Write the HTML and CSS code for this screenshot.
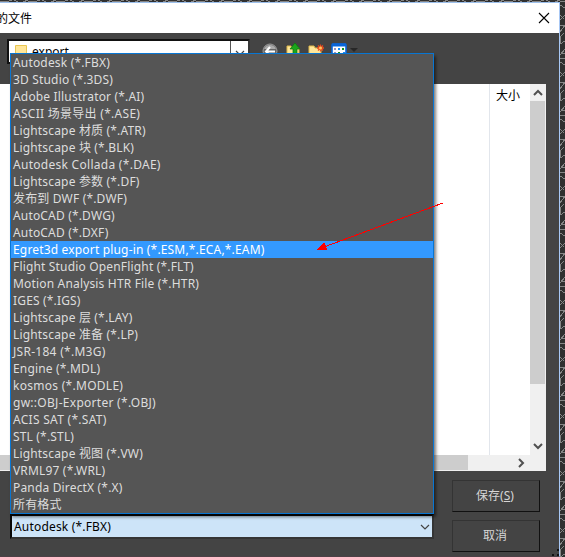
FILE: index.html
```
<!DOCTYPE html>
<html lang="zh-CN">
<head>
<meta charset="utf-8">
<title>的文件</title>
<link rel="stylesheet" href="styles.css">
</head>
<body>
<svg class="backdrop" width="565" height="557" aria-hidden="true" shape-rendering="crispEdges">
  <defs><pattern id="cracks" width="28" height="57" patternUnits="userSpaceOnUse">
    <path d="M0 1h9l3-1M14 0l4 2h5l5-2M0 5l5 3 5-4 4 5M0 15l4 4M0 25h5l-5 7M5 8v7l-5 5M4 33l-4 4v7l5-3M5 49l-5 6M1 53h4" fill="none" stroke="#858585"/>
  </pattern></defs>
  <rect width="565" height="557" fill="#303030"/>
  <rect width="565" height="557" fill="url(#cracks)"/>
</svg>
<main class="dialog">
  <header class="titlebar">
    <span class="title">的文件</span>
    <svg class="close" width="12" height="12" viewBox="0 0 12 12"><path d="M1 1l10 10M11 1L1 11" stroke="#000" stroke-width="1.1"/></svg>
  </header>
  <div class="toolbar">
    <div class="location">
      <svg width="12" height="14" viewBox="0 0 12 14"><path d="M.5.5h11v13H.5z" fill="#ffe69a" stroke="#e8c651"/></svg>
      <span class="location-name">export</span>
      <span class="drop"><svg width="10" height="6" viewBox="0 0 10 6"><path d="M1 1l4 4 4-4" fill="none" stroke="#444" stroke-width="1.2"/></svg></span>
    </div>
    <div class="tools">
      <svg width="16" height="16" viewBox="0 0 16 16"><circle cx="8" cy="8" r="7" fill="#666" stroke="#999"/><path d="M2 6a6.500 6.500 0 0 1 12 0" fill="#aaa"/><path d="M13 8.500H5M8 4L4 8.500l4 4" fill="none" stroke="#fff" stroke-width="2"/></svg>
      <svg width="16" height="16" viewBox="0 0 16 16"><path d="M2 3h4l1 2h7v10H2z" fill="#ffe79a" stroke="#dfb94a"/><path d="M8 14V6H5l5-6 5 6h-3v8z" fill="#1ba51b" stroke="#087a0b" stroke-width=".7"/></svg>
      <svg width="16" height="16" viewBox="0 0 16 16"><path d="M1 3h5l1 2h6v10H1z" fill="#ffe79a" stroke="#dfb94a"/><path d="M12.500 1.500v7M9 5h7M10 2.500l5 5M15 2.500l-5 5" stroke="#ee4a1c" stroke-width="1.300"/><circle cx="12.500" cy="5" r="1.500" fill="#ffc45b"/></svg>
      <svg width="16" height="16" viewBox="0 0 16 16"><rect x="1" y="1" width="14" height="14" rx="1" fill="#fff" stroke="#0864d8" stroke-width="1.600"/><path d="M1 2h14" stroke="#0864d8" stroke-width="3"/><path d="M3 6h2M3 10h2" stroke="#9c91bd" stroke-width="2"/><path d="M7 6h2M12 10h2" stroke="#168cff" stroke-width="2"/><path d="M11 6h2M7 10h2" stroke="#11911d" stroke-width="2"/></svg>
      <svg class="more" width="8" height="5" viewBox="0 0 8 5"><path d="M0 0h8L4 4z" fill="#272727"/></svg>
    </div>
  </div>
  <section class="files">
    <div class="sheet">
      <div class="names"></div>
      <div class="size">大小</div>
    </div>
    <div class="vscroll">
      <svg width="16" height="17" viewBox="0 0 16 17"><path d="M4 11l4-4 4 4" fill="none" stroke="#505050" stroke-width="2"/></svg>
      <div class="vthumb"></div>
      <svg class="down" width="16" height="17" viewBox="0 0 16 17"><path d="M4 6l4 4 4-4" fill="none" stroke="#505050" stroke-width="2"/></svg>
    </div>
    <div class="hscroll"><div class="hthumb"></div><svg width="16" height="16" viewBox="0 0 16 16"><path d="M6 4l4 4-4 4" fill="none" stroke="#505050" stroke-width="2"/></svg></div>
  </section>
  <footer class="actions">
    <div class="type"><span>Autodesk (*.FBX)</span><svg width="10" height="6" viewBox="0 0 10 6"><path d="M1 1l4 4 4-4" fill="none" stroke="#444" stroke-width="1.200"/></svg></div>
    <div class="buttons">
      <button class="button">保存(<u>S</u>)</button>
      <button class="button">取消</button>
    </div>
  </footer>
  <svg class="grip" width="7" height="7" viewBox="0 0 7 7"><path d="M5 0h2v2H5zM0 5h2v2H0zM5 5h2v2H5z" fill="#111"/></svg>
</main>
<ul class="menu">
  <li>Autodesk (*.FBX)</li><li>3D Studio (*.3DS)</li><li>Adobe Illustrator (*.AI)</li><li class="wide">ASCII 场景导出 (*.ASE)</li><li>Lightscape 材质 (*.ATR)</li><li>Lightscape 块 (*.BLK)</li><li class="wide">Autodesk Collada (*.DAE)</li><li>Lightscape 参数 (*.DF)</li><li>发布到 DWF (*.DWF)</li><li>AutoCAD (*.DWG)</li><li>AutoCAD (*.DXF)</li><li class="selected">Egret3d export plug-in (*.ESM,*.ECA,*.EAM)</li><li>Flight Studio OpenFlight (*.FLT)</li><li>Motion Analysis HTR File (*.HTR)</li><li>IGES (*.IGS)</li><li>Lightscape 层 (*.LAY)</li><li>Lightscape 准备 (*.LP)</li><li class="wide">JSR-184 (*.M3G)</li><li>Engine (*.MDL)</li><li class="wide">kosmos (*.MODLE)</li><li class="wide">gw::OBJ-Exporter (*.OBJ)</li><li class="wide">ACIS SAT (*.SAT)</li><li>STL (*.STL)</li><li>Lightscape 视图 (*.VW)</li><li>VRML97 (*.WRL)</li><li>Panda DirectX (*.X)</li><li>所有格式</li>
</ul>
<svg class="pointer" width="128" height="50" viewBox="0 0 128 50" shape-rendering="crispEdges"><path d="M127 1L8 45" stroke="#f00" fill="none"/><path d="M1 47.500L8.500 40.500 11 47.500z" fill="#f00"/></svg>
</body>
</html>
```
FILE: styles.css
```
* { box-sizing: border-box; }
body { margin: 0; width: 565px; height: 557px; overflow: hidden; position: relative; display: flow-root; font: 12px/17px "Noto Sans", "Noto Sans CJK SC", sans-serif; }
svg { display: block; flex: none; }
.backdrop { position: absolute; inset: 0; }
.dialog { position: relative; width: 560px; height: 555px; margin-top: 2px; border-top: 1px solid #9dc0ec; border-right: 1px solid #a8c8f5; border-bottom: 1px solid #4d4046; background: #444; display: flex; flex-direction: column; }
.titlebar { height: 30px; flex: none; background: #fff; display: flex; align-items: center; justify-content: space-between; padding-right: 9px; }
.title { margin-left: -4px; }
.toolbar { height: 51px; flex: none; padding: 6px 0 0 7px; display: flex; }
.location { width: 243px; height: 25px; border: 2px solid #111; border-right-color: #393939; background: #fff; display: flex; align-items: center; padding-left: 6px; }
.location-name { margin-left: 5px; flex: 1; }
.drop { width: 18px; height: 21px; border-left: 1px solid #555; display: grid; place-items: center; padding-top: 3px; }
.tools { display: flex; gap: 7px; padding: 4px 0 0 12px; }
.tools .more { margin: 5px 0 0 -4px; }
.files { width: 546px; height: 387px; flex: none; background: #f0f0f0; display: grid; grid-template-columns: 530px 16px; grid-template-rows: 371px 16px; }
.sheet { display: flex; background: #fff; }
.names { width: 490px; border-right: 1px solid #e2e6ec; }
.size { padding: 3px 0 0 6px; }
.vscroll { display: flex; flex-direction: column; }
.vthumb { height: 283px; width: 15px; background: #cdcdcd; }
.down { margin-top: 54px; }
.hscroll { grid-column: 1 / 3; display: flex; justify-content: space-between; padding-right: 17px; }
.hthumb { width: 468px; height: 15px; background: #cdcdcd; }
.actions { display: flex; justify-content: space-between; padding: 9px 19px 0 10px; }
.type { width: 424px; height: 25px; margin-top: 34px; background: #cde4f8; border: 2px solid #080808; border-right-color: #353535; border-bottom-color: #353535; display: flex; align-items: center; justify-content: space-between; padding: 0 2px; letter-spacing: .18px; }
.buttons { display: grid; gap: 8px; }
.button { width: 88px; height: 32px; padding: 0 2px 1px 0; background: #444; border: 1px solid #343434; border-right-color: #111; border-bottom-color: #111; color: #d6d6d6; font: inherit; }
.grip { position: absolute; right: 0; bottom: 0; }
.menu { position: absolute; left: 10px; top: 53px; width: 424px; height: 461px; margin: 0; padding: 0; list-style: none; background: #555; border: 1px solid #0876d3; color: #ddd; box-shadow: 2px 3px 3px rgba(0,0,0,.5); letter-spacing: .17px; }
.menu li { height: 17px; padding-left: 2px; white-space: nowrap; }
.menu .wide { letter-spacing: .28px; }
.menu .selected { background: #3399ff; color: #fff; }
.pointer { position: absolute; left: 316px; top: 202px; }
```
